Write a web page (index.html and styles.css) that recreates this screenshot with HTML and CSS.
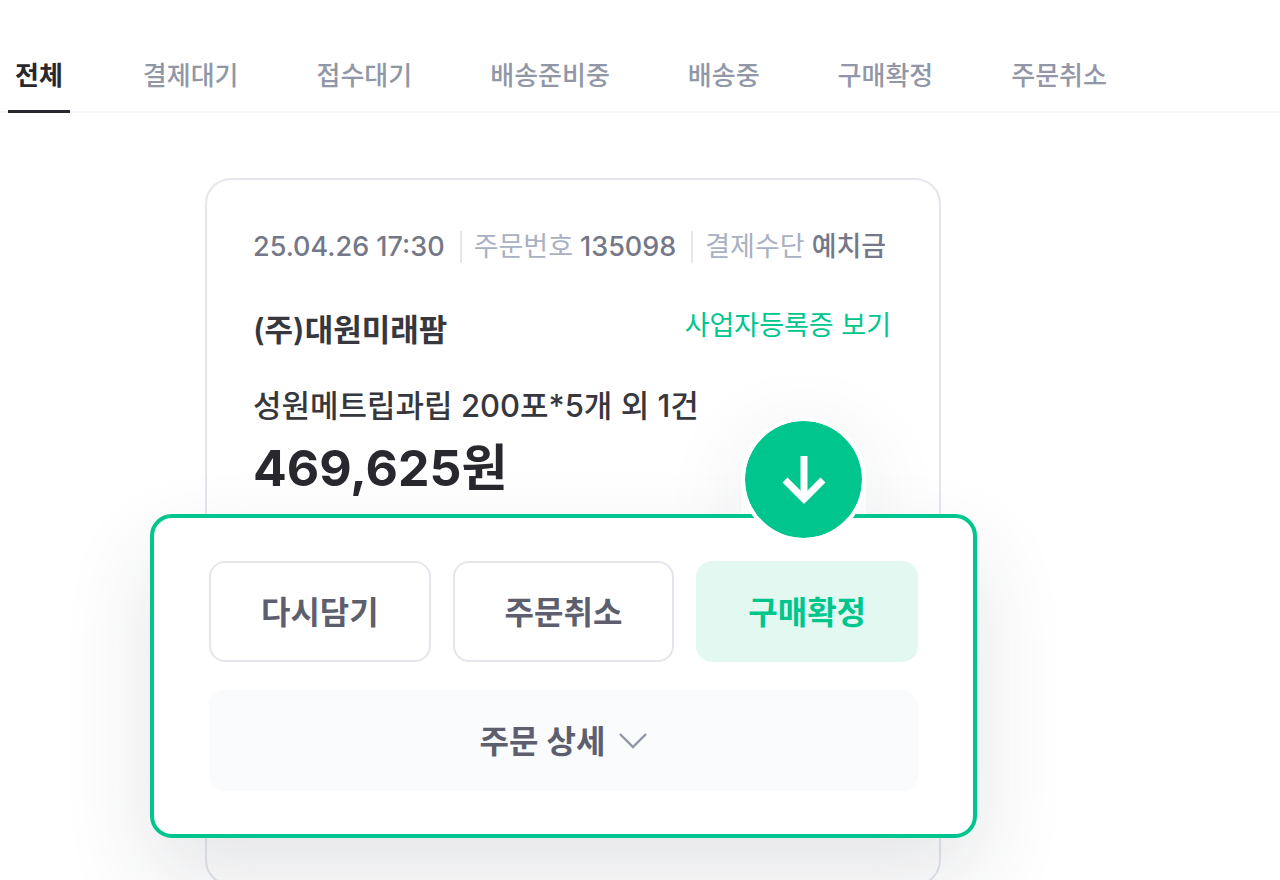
FILE: index.html
```html
<!DOCTYPE html>
<html lang="ko">
<head>
    <meta charset="UTF-8">
    <meta name="viewport" content="width=device-width, initial-scale=1.0">
    <title>주문 내역</title>
    <link rel="stylesheet" href="styles.css">
</head>
<body>
    <nav class="tabs">
        <a href="#" class="tab active">전체</a>
        <a href="#" class="tab">결제대기</a>
        <a href="#" class="tab">접수대기</a>
        <a href="#" class="tab">배송준비중</a>
        <a href="#" class="tab">배송중</a>
        <a href="#" class="tab">구매확정</a>
        <a href="#" class="tab">주문취소</a>
    </nav>

    <main class="orders">
        <article class="order-card">
            <div class="order-meta">
                <span class="meta-item">25.04.26 17:30</span>
                <span class="meta-item"><span class="meta-label">주문번호</span> 135098</span>
                <span class="meta-item"><span class="meta-label">결제수단</span> 예치금</span>
            </div>

            <div class="order-seller">
                <h2 class="seller-name">(주)대원미래팜</h2>
                <a href="#" class="license-link">사업자등록증 보기</a>
            </div>

            <p class="order-product">성원메트립과립 200포*5개 외 1건</p>
            <p class="order-price">469,625원</p>

            <!-- Highlighted actions -->
            <section class="order-actions">
                <div class="arrow-badge">
                    <svg width="48" height="52" viewBox="0 0 48 52" fill="none" stroke="#fff" stroke-width="7">
                        <path d="M24 2V44"/>
                        <path d="M5 26L24 45L43 26"/>
                    </svg>
                </div>
                <div class="button-row">
                    <button type="button" class="button">다시담기</button>
                    <button type="button" class="button">주문취소</button>
                    <button type="button" class="button confirm">구매확정</button>
                </div>
                <button type="button" class="button detail">
                    주문 상세
                    <svg class="chevron" width="28" height="18" viewBox="0 0 28 18" fill="none" stroke="#8f96a8" stroke-width="2.4">
                        <path d="M1 2L14 15L27 2"/>
                    </svg>
                </button>
            </section>
        </article>
    </main>
</body>
</html>
```

FILE: styles.css
```css
* {
    box-sizing: border-box;
}

body {
    margin: 0;
    font-family: Inter, "Noto Sans CJK KR", sans-serif;
    color: #37373e;
    background-color: #fff;
    overflow: hidden;
}

h2, p {
    margin: 0;
}

a {
    text-decoration: none;
}

.tabs {
    display: flex;
    gap: 62px;
    margin-top: 40px;
    padding-left: 8px;
    border-bottom: 2px solid #f4f5f9;
}

.tab {
    height: 73px;
    margin-bottom: -2px;
    padding: 0 8px;
    font-size: 26px;
    font-weight: 500;
    line-height: 72px;
    white-space: nowrap;
    color: #9197a7;
}

.tab.active {
    margin-right: 3px;
    padding: 0 7px;
    font-weight: 600;
    color: #28282e;
    border-bottom: 3px solid #28282e;
}

.orders {
    padding: 65px 339px 0 205px;
}

.order-card {
    padding: 47px 48px 46px 46px;
    border: 2px solid #e5e5ed;
    border-radius: 26px;
}

.order-meta {
    display: flex;
    align-items: center;
    height: 40px;
    font-size: 27px;
    font-weight: 500;
    line-height: 40px;
    white-space: nowrap;
    color: #747888;
}

.meta-item + .meta-item {
    display: flex;
    align-items: center;
    gap: 7px;
}

.meta-item + .meta-item::before {
    content: "";
    width: 2px;
    height: 32px;
    margin: 0 5px 0 15px;
    background-color: #e4e5ed;
}

.meta-label {
    font-weight: 400;
    color: #a8b0c2;
}

.order-seller {
    display: flex;
    justify-content: space-between;
    margin-top: 37px;
    white-space: nowrap;
}

.seller-name {
    font-size: 31px;
    font-weight: 600;
    line-height: 52px;
}

.license-link {
    font-size: 27px;
    line-height: 44px;
    color: #00c68d;
}

.order-product {
    margin-top: 26px;
    font-size: 31px;
    font-weight: 500;
    line-height: 48px;
    white-space: nowrap;
}

.order-price {
    font-size: 50px;
    font-weight: 700;
    line-height: 76px;
    color: #28282e;
}

.order-actions {
    position: relative;
    display: flex;
    flex-direction: column;
    gap: 28px;
    margin: 8px -86px 0 -103px;
    padding: 43px 55px;
    background-color: #fff;
    border: 4px solid #00c68d;
    border-radius: 22px;
    box-shadow: 0 40px 90px rgba(35, 40, 55, 0.12);
}

.arrow-badge {
    position: absolute;
    top: -101px;
    right: 107px;
    display: flex;
    justify-content: center;
    align-items: center;
    width: 125px;
    height: 125px;
    background-color: #00c68d;
    background-clip: padding-box;
    border: 4px solid #fff;
    border-radius: 50%;
}

/* Shadow of the badge, only above the panel */
.order-actions::before {
    content: "";
    position: absolute;
    top: -101px;
    right: 107px;
    width: 125px;
    height: 97px;
    border-radius: 62px 62px 0 0;
    box-shadow: 0 20px 90px rgba(35, 40, 55, 0.09);
    clip-path: inset(-100px -200px 0);
}

.button-row {
    display: grid;
    grid-template-columns: repeat(3, 1fr);
    gap: 22px;
}

.button {
    display: flex;
    justify-content: center;
    align-items: center;
    gap: 14px;
    height: 101px;
    padding: 0 0 4px;
    font-family: inherit;
    font-size: 32px;
    font-weight: 600;
    white-space: nowrap;
    color: #5e5f6e;
    background-color: #fff;
    border: 2px solid #e5e5ed;
    border-radius: 16px;
    cursor: pointer;
}

.button.confirm {
    color: #00c68d;
    background-color: #e3f8f1;
    border-color: #e3f8f1;
}

.button.detail {
    background-color: #fafbfd;
    border-color: #fafbfd;
}

.chevron {
    margin-top: 4px;
}
```
